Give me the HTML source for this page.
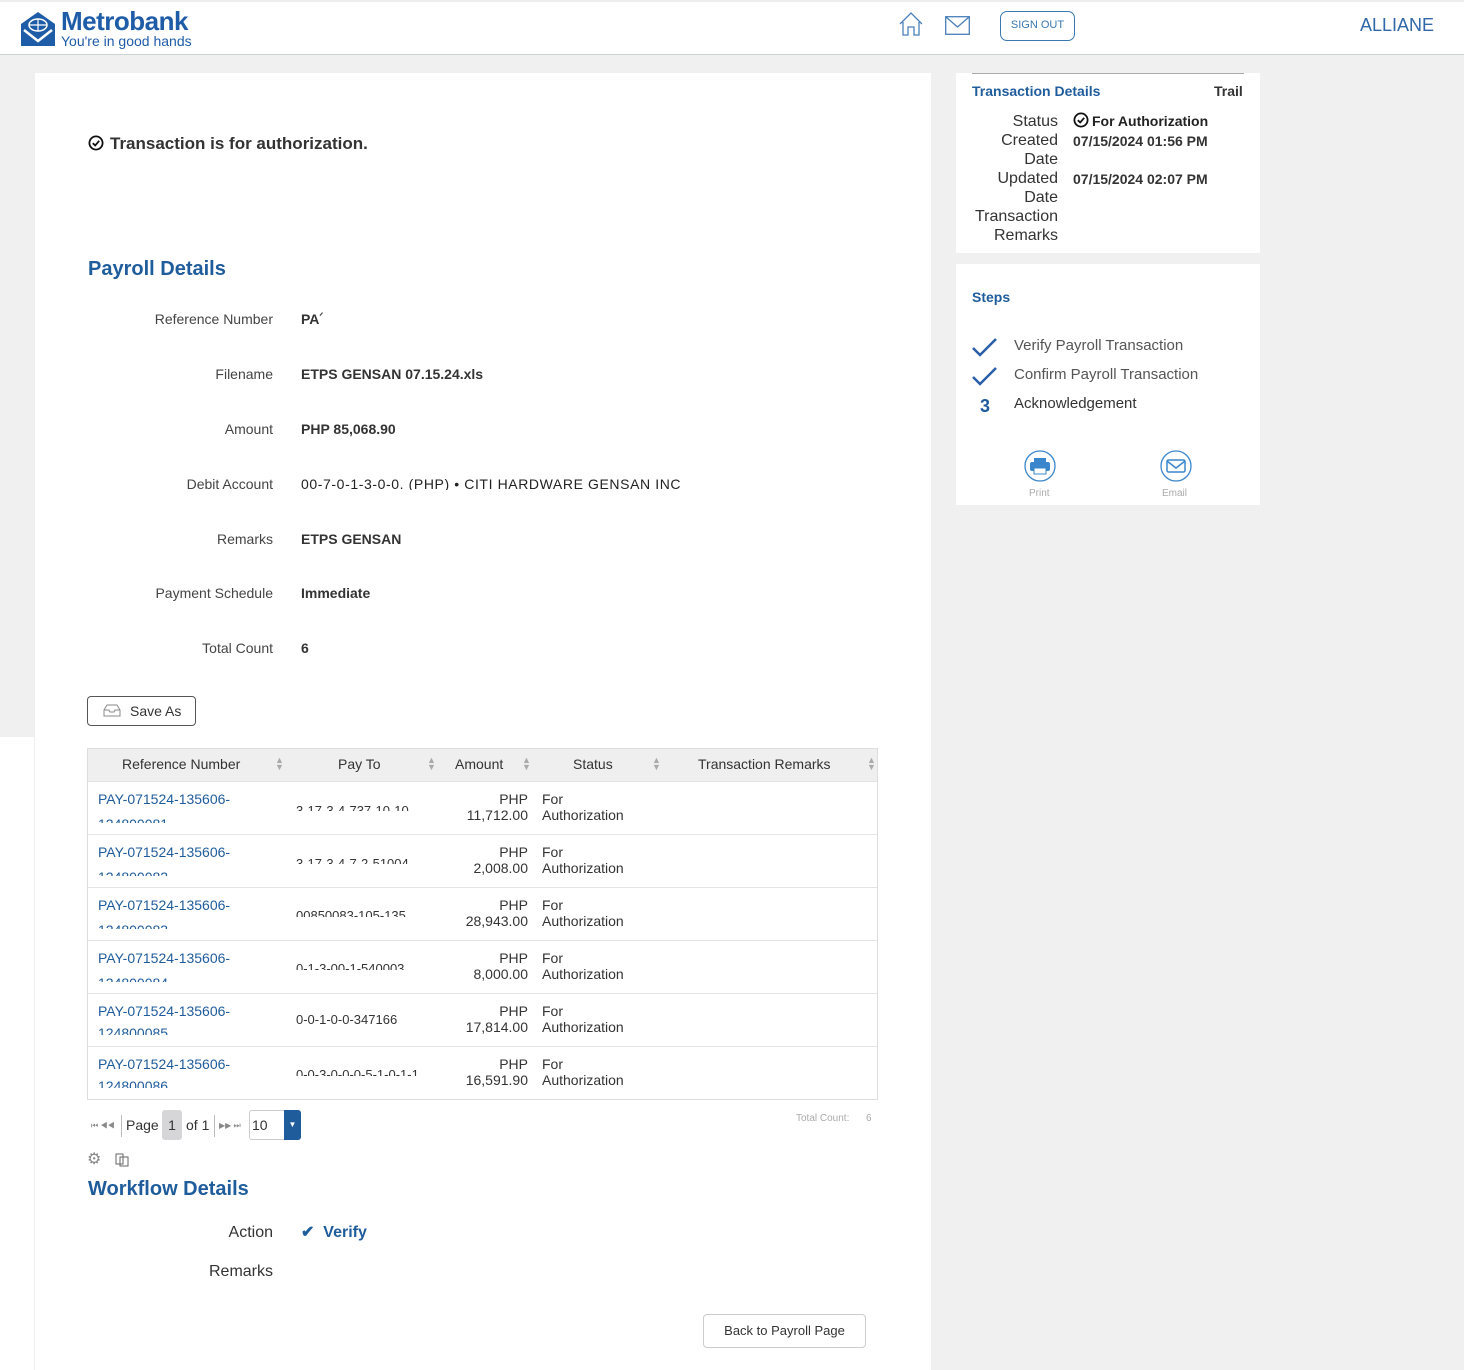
<!DOCTYPE html>
<html><head><meta charset="utf-8"><style>
*{margin:0;padding:0;box-sizing:border-box}
html,body{width:1464px;height:1370px;overflow:hidden}
body{position:relative;background:#f0f0f0;font-family:"Liberation Sans",sans-serif;color:#333}
.a{position:absolute;white-space:nowrap}
.hdr{position:absolute;left:0;top:0;width:1464px;height:55px;background:#fff;border-top:2px solid #eee;border-bottom:1px solid #ccd2d2}
.main{position:absolute;left:35px;top:73px;width:896px;height:1297px;background:#fff}
.lbl{font-size:14px;color:#444;text-align:right;width:200px;left:73px}
.val{font-size:14px;font-weight:bold;color:#333;left:301px}
.blue{color:#1f5c9c}
.th{font-size:14px;color:#333;top:756px}
.row{position:absolute;left:88px;width:789px;height:53px;border-top:1px solid #e4e4e4}
.cl{font-size:14px;line-height:16px}
.clip{overflow:hidden}
</style></head><body>
<div class="hdr"></div>
<svg class="a" style="left:19px;top:10px" width="38" height="38" viewBox="0 0 38 38"><path d="M2 14 L19 2 L36 14 L36 36 L2 36Z" fill="#1f5ca8"/><path d="M5 20 L19 31 L33 20" stroke="#fff" stroke-width="2.5" fill="none"/><ellipse cx="19" cy="15" rx="9" ry="6" fill="none" stroke="#fff" stroke-width="1.5"/><path d="M10 15h18M19 9v12" stroke="#fff" stroke-width="1.2"/></svg>
<div class="a" style="left:61px;top:6px;font-size:26px;font-weight:bold;color:#1f5ca8;letter-spacing:-0.5px">Metrobank</div>
<div class="a" style="left:61px;top:33px;font-size:14px;color:#1f5ca8">You're in good hands</div>
<svg class="a" style="left:898px;top:11px" width="26" height="26" viewBox="0 0 26 26"><path d="M2 13 L13 2 L24 13 M5 11 V24 H10 V16 H16 V24 H21 V11" fill="none" stroke="#4a7fb8" stroke-width="1.3"/></svg>
<svg class="a" style="left:945px;top:16px" width="25" height="19" viewBox="0 0 25 19"><rect x="0.7" y="0.7" width="23.6" height="17.6" fill="none" stroke="#4a7fb8" stroke-width="1.3"/><path d="M1 1 L12.5 11 L24 1" fill="none" stroke="#4a7fb8" stroke-width="1.3"/></svg>
<div class="a" style="left:1000px;top:11px;width:75px;height:30px;border:1.5px solid #3a78b0;border-radius:7px;font-size:11px;color:#3a78b0;text-align:center;line-height:27px">SIGN OUT</div>
<div class="a" style="left:1360px;top:15px;font-size:18px;color:#2f67a8">ALLIANE</div>

<div class="a" style="left:0;top:737px;width:35px;height:640px;background:#fff;border-right:1px solid #eee"></div>
<div class="main"></div>

<svg class="a" style="left:88px;top:135px" width="16" height="16" viewBox="0 0 16 16"><circle cx="8" cy="8" r="6.6" fill="none" stroke="#111" stroke-width="1.8"/><path d="M4.8 8.2 L7.2 10.5 L11.2 5.8" fill="none" stroke="#111" stroke-width="1.8"/></svg>
<div class="a" style="left:110px;top:134px;font-size:17px;font-weight:bold;color:#333">Transaction is for authorization.</div>

<div class="a blue" style="left:88px;top:258px;font-size:20px;font-weight:bold">Payroll Details</div>
<div class="a lbl" style="top:311px">Reference Number</div><div class="a val" style="top:311px">PA<span style="font-size:9px;vertical-align:top">ᐟ</span></div>
<div class="a lbl" style="top:366px">Filename</div><div class="a val" style="top:366px">ETPS GENSAN 07.15.24.xls</div>
<div class="a lbl" style="top:421px">Amount</div><div class="a val" style="top:421px">PHP 85,068.90</div>
<div class="a lbl" style="top:476px">Debit Account</div><div class="a val clip" style="top:476px;height:14px;font-weight:normal;font-size:14px;color:#222;letter-spacing:0.6px">00-7-0-1-3-0-0. (PHP) • CITI HARDWARE GENSAN INC</div>
<div class="a lbl" style="top:531px">Remarks</div><div class="a val" style="top:531px">ETPS GENSAN</div>
<div class="a lbl" style="top:585px">Payment Schedule</div><div class="a val" style="top:585px">Immediate</div>
<div class="a lbl" style="top:640px">Total Count</div><div class="a val" style="top:640px">6</div>

<div class="a" style="left:87px;top:696px;width:109px;height:30px;border:1px solid #555;border-radius:4px"></div>
<svg class="a" style="left:103px;top:704px" width="18" height="13" viewBox="0 0 18 13"><path d="M1 6 L4 1 H14 L17 6 V12 H1Z M1 6 H6 L7 8 H11 L12 6 H17" fill="none" stroke="#888" stroke-width="1"/></svg>
<div class="a" style="left:130px;top:703px;font-size:14px;color:#333">Save As</div>

<div class="a" style="left:87px;top:748px;width:791px;height:352px;border:1px solid #ddd"></div>
<div class="a" style="left:88px;top:749px;width:789px;height:32px;background:#efefef"></div>
<div class="a th" style="left:122px">Reference Number</div>
<div class="a th" style="left:338px">Pay To</div>
<div class="a th" style="left:455px">Amount</div>
<div class="a th" style="left:573px">Status</div>
<div class="a th" style="left:698px">Transaction Remarks</div>
<div class="a" style="left:275px;top:757px;font-size:9px;color:#aaa;line-height:7px">▲<br>▼</div>
<div class="a" style="left:427px;top:757px;font-size:9px;color:#aaa;line-height:7px">▲<br>▼</div>
<div class="a" style="left:522px;top:757px;font-size:9px;color:#aaa;line-height:7px">▲<br>▼</div>
<div class="a" style="left:652px;top:757px;font-size:9px;color:#aaa;line-height:7px">▲<br>▼</div>
<div class="a" style="left:867px;top:757px;font-size:9px;color:#aaa;line-height:7px">▲<br>▼</div>

<div class="row" style="top:781px"></div>
<div class="row" style="top:834px"></div>
<div class="row" style="top:887px"></div>
<div class="row" style="top:940px"></div>
<div class="row" style="top:993px"></div>
<div class="row" style="top:1046px"></div>

<div class="a" style="left:98px;top:791px"><div class="cl blue">PAY-071524-135606-</div><div class="cl blue clip" style="height:7px;margin-top:9px">124800081</div></div>
<div class="a" style="left:98px;top:844px"><div class="cl blue">PAY-071524-135606-</div><div class="cl blue clip" style="height:7px;margin-top:9px">124800082</div></div>
<div class="a" style="left:98px;top:897px"><div class="cl blue">PAY-071524-135606-</div><div class="cl blue clip" style="height:7px;margin-top:9px">124800083</div></div>
<div class="a" style="left:98px;top:950px"><div class="cl blue">PAY-071524-135606-</div><div class="cl blue clip" style="height:7px;margin-top:9px">124800084</div></div>
<div class="a" style="left:98px;top:1003px"><div class="cl blue">PAY-071524-135606-</div><div class="cl blue clip" style="height:10px;margin-top:6px">124800085</div></div>
<div class="a" style="left:98px;top:1056px"><div class="cl blue">PAY-071524-135606-</div><div class="cl blue clip" style="height:10px;margin-top:6px">124800086</div></div>

<div class="a cl clip" style="left:296px;top:803px;height:8px;font-size:13px">3-17-3-4-737-10-10</div>
<div class="a cl clip" style="left:296px;top:856px;height:8px;font-size:13px">3-17-3-4-7-2-51004</div>
<div class="a cl clip" style="left:296px;top:908px;height:9px;font-size:13px">00850083-105-135</div>
<div class="a cl clip" style="left:296px;top:961px;height:9px;font-size:13px">0-1-3-00-1-540003</div>
<div class="a cl clip" style="left:296px;top:1012px;height:14px;font-size:13px">0-0-1-0-0-347166</div>
<div class="a cl clip" style="left:296px;top:1067px;height:9px;font-size:13px">0-0-3-0-0-0-5-1-0-1-1</div>

<div class="a cl" style="left:440px;top:791px;width:88px;text-align:right">PHP<br>11,712.00</div>
<div class="a cl" style="left:440px;top:844px;width:88px;text-align:right">PHP<br>2,008.00</div>
<div class="a cl" style="left:440px;top:897px;width:88px;text-align:right">PHP<br>28,943.00</div>
<div class="a cl" style="left:440px;top:950px;width:88px;text-align:right">PHP<br>8,000.00</div>
<div class="a cl" style="left:440px;top:1003px;width:88px;text-align:right">PHP<br>17,814.00</div>
<div class="a cl" style="left:440px;top:1056px;width:88px;text-align:right">PHP<br>16,591.90</div>
<div class="a cl" style="left:542px;top:791px">For<br>Authorization</div>
<div class="a cl" style="left:542px;top:844px">For<br>Authorization</div>
<div class="a cl" style="left:542px;top:897px">For<br>Authorization</div>
<div class="a cl" style="left:542px;top:950px">For<br>Authorization</div>
<div class="a cl" style="left:542px;top:1003px">For<br>Authorization</div>
<div class="a cl" style="left:542px;top:1056px">For<br>Authorization</div>

<div class="a" style="left:91px;top:1121px;font-size:8px;color:#888">⏮ ◀◀</div>
<div class="a" style="left:121px;top:1115px;width:1px;height:22px;background:#bbb"></div>
<div class="a" style="left:126px;top:1117px;font-size:14px">Page</div>
<div class="a" style="left:162px;top:1110px;width:20px;height:30px;background:#d6d6d9;border-radius:3px;font-size:14px;text-align:center;line-height:30px">1</div>
<div class="a" style="left:186px;top:1117px;font-size:14px">of 1</div>
<div class="a" style="left:214px;top:1115px;width:1px;height:22px;background:#bbb"></div>
<div class="a" style="left:219px;top:1121px;font-size:8px;color:#888">▶▶ ⏭</div>
<div class="a" style="left:249px;top:1110px;width:52px;height:30px;border:1px solid #ccc;border-radius:3px;font-size:14px;line-height:28px;padding-left:2px">10</div>
<div class="a" style="left:284px;top:1110px;width:17px;height:30px;background:#1f5c9c;border-radius:0 3px 3px 0;color:#fff;font-size:8px;text-align:center;line-height:30px">▼</div>
<div class="a" style="left:796px;top:1113px;font-size:10px;color:#aaa">Total Count:&nbsp;&nbsp;&nbsp;&nbsp;&nbsp;&nbsp;6</div>
<div class="a" style="left:87px;top:1149px;font-size:16px;color:#888">⚙</div>
<svg class="a" style="left:115px;top:1151px" width="16" height="16" viewBox="0 0 16 16"><path d="M1 3h7v10H1z M5 6h8v9H5z" fill="#fff" stroke="#666"/></svg>

<div class="a blue" style="left:88px;top:1178px;font-size:20px;font-weight:bold">Workflow Details</div>
<div class="a" style="left:73px;top:1224px;width:200px;text-align:right;font-size:16px">Action</div>
<div class="a" style="left:301px;top:1222px;font-size:16px;font-weight:bold;color:#1f5c9c">✔&nbsp; Verify</div>
<div class="a" style="left:73px;top:1263px;width:200px;text-align:right;font-size:16px">Remarks</div>
<div class="a" style="left:703px;top:1314px;width:163px;height:34px;border:1px solid #ccc;border-radius:4px;font-size:13px;text-align:center;line-height:32px">Back to Payroll Page</div>

<div class="a" style="left:956px;top:73px;width:304px;height:180px;background:#fff"></div>
<div class="a" style="left:972px;top:73px;width:272px;height:1px;background:#aaa"></div>
<div class="a blue" style="left:972px;top:83px;font-size:14px;font-weight:bold">Transaction Details</div>
<div class="a" style="left:1214px;top:83px;font-size:14px;font-weight:bold">Trail</div>
<div class="a" style="left:958px;top:112px;width:100px;text-align:right;font-size:16px;line-height:19px;color:#333;white-space:normal">Status<br>Created<br>Date<br>Updated<br>Date<br>Transaction<br>Remarks</div>
<svg class="a" style="left:1073px;top:112px" width="16" height="16" viewBox="0 0 16 16"><circle cx="8" cy="8" r="6.6" fill="none" stroke="#111" stroke-width="1.8"/><path d="M4.8 8.2 L7.2 10.5 L11.2 5.8" fill="none" stroke="#111" stroke-width="1.8"/></svg>
<div class="a" style="left:1092px;top:113px;font-size:14px;font-weight:bold;color:#222">For Authorization</div>
<div class="a" style="left:1073px;top:133px;font-size:14px;font-weight:bold;color:#333">07/15/2024 01:56 PM</div>
<div class="a" style="left:1073px;top:171px;font-size:14px;font-weight:bold;color:#333">07/15/2024 02:07 PM</div>

<div class="a" style="left:956px;top:264px;width:304px;height:241px;background:#fff"></div>
<div class="a blue" style="left:972px;top:289px;font-size:14px;font-weight:bold">Steps</div>
<svg class="a" style="left:972px;top:337px" width="26" height="20" viewBox="0 0 26 20"><path d="M1 11 L8 18 L24 2" fill="none" stroke="#2a5ea8" stroke-width="2.5"/></svg>
<svg class="a" style="left:972px;top:366px" width="26" height="20" viewBox="0 0 26 20"><path d="M1 11 L8 18 L24 2" fill="none" stroke="#2a5ea8" stroke-width="2.5"/></svg>
<div class="a" style="left:1014px;top:337px;font-size:15px;color:#555">Verify Payroll Transaction</div>
<div class="a" style="left:1014px;top:366px;font-size:15px;color:#555">Confirm Payroll Transaction</div>
<div class="a" style="left:980px;top:396px;font-size:18px;font-weight:bold;color:#1f5c9c">3</div>
<div class="a" style="left:1014px;top:395px;font-size:15px;color:#333">Acknowledgement</div>
<svg class="a" style="left:1024px;top:450px" width="32" height="32" viewBox="0 0 32 32"><circle cx="16" cy="16" r="15" fill="#fff" stroke="#3a86cc" stroke-width="1.3"/><rect x="10" y="8" width="12" height="5" fill="#3a86cc"/><rect x="6" y="12" width="20" height="9" rx="2" fill="#3a86cc"/><rect x="10" y="18" width="12" height="6" fill="#fff" stroke="#3a86cc"/></svg>
<svg class="a" style="left:1160px;top:450px" width="32" height="32" viewBox="0 0 32 32"><circle cx="16" cy="16" r="15" fill="#fff" stroke="#3a86cc" stroke-width="1.3"/><rect x="7" y="10" width="18" height="12" rx="1.5" fill="none" stroke="#3a86cc" stroke-width="1.5"/><path d="M7 11 L16 18 L25 11" fill="none" stroke="#3a86cc" stroke-width="1.5"/></svg>
<div class="a" style="left:1029px;top:488px;font-size:10px;color:#aaa">Print</div>
<div class="a" style="left:1162px;top:488px;font-size:10px;color:#aaa">Email</div>
</body></html>
